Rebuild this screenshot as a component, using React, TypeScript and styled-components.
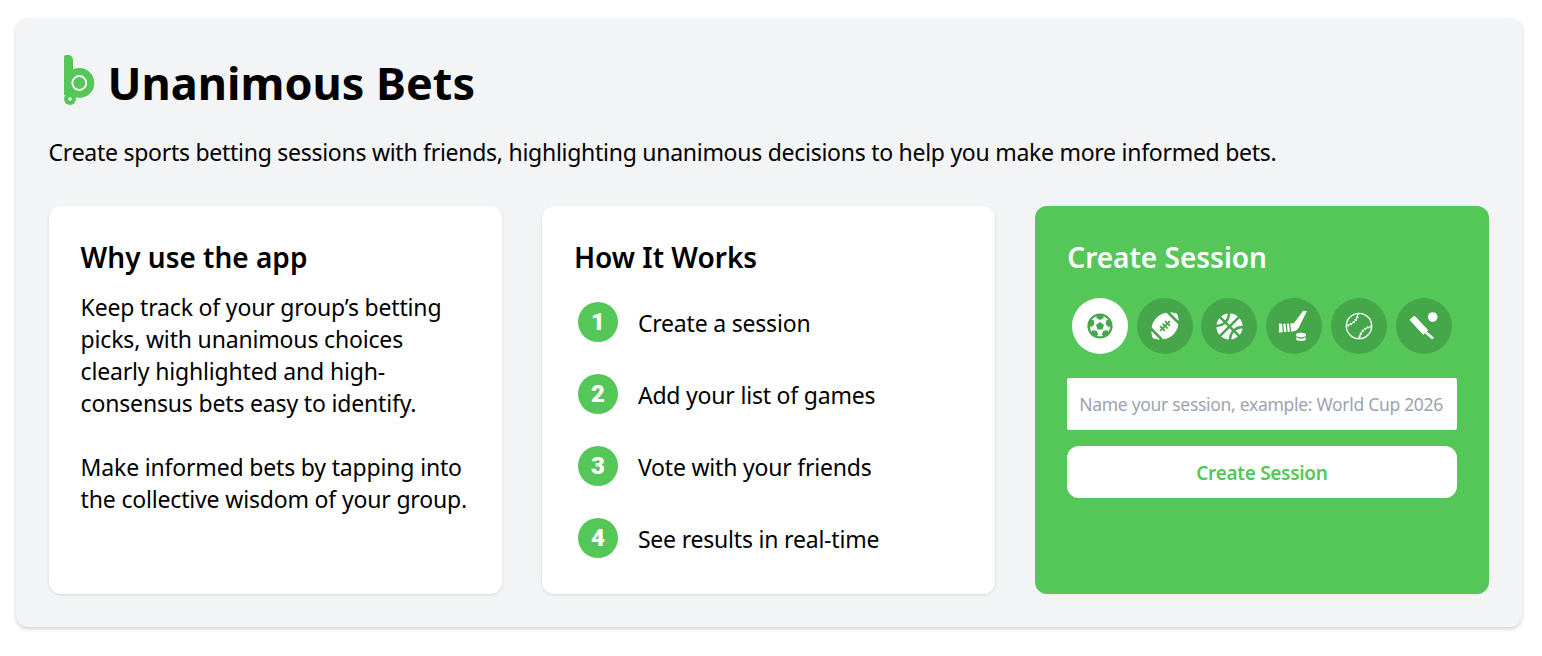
import React from 'react'
import styled, { createGlobalStyle } from 'styled-components'
import { FaFutbol, FaFootballBall, FaBasketballBall } from 'react-icons/fa'

const GREEN = '#55c759'
const DARK_GREEN = '#46a64a'

const GlobalStyle = createGlobalStyle`
  html, body {
    margin: 0;
    background: #fff;
    font-family: "Noto Sans", "Open Sans", sans-serif;
    color: #000;
  }
  * { box-sizing: border-box; }
`

const Page = styled.div`
  width: 1542px;
  height: 656px;
  padding: 18px 20px 29px 16px;
`

const Shell = styled.main`
  height: 609px;
  padding: 32px 33.4px 33px 32.6px;
  background: #f3f4f6;
  border-radius: 12px;
  box-shadow: 0 2px 4px rgba(0, 0, 0, 0.18);
`

const Header = styled.header`
  display: flex;
  align-items: center;
  gap: 10px;
  height: 66px;
  padding-left: 13px;
`

const LogoMark = styled.svg`
  flex: none;
  margin-bottom: 6px;
`

const Title = styled.h1`
  margin: 0 0 1px;
  font-size: 45px;
  font-weight: 700;
  line-height: 65px;
`

const Intro = styled.p`
  margin: 20px 0 38px;
  font-size: 23px;
  line-height: 32px;
  letter-spacing: -0.27px;
`

const Columns = styled.div`
  display: grid;
  grid-template-columns: repeat(3, 1fr);
  gap: 40px;
  height: 388px;
`

const Card = styled.section<{ $accent?: boolean }>`
  padding: 32px;
  border-radius: 12px;
  background: ${p => (p.$accent ? GREEN : '#fff')};
  color: ${p => (p.$accent ? '#fff' : '#000')};
  box-shadow: ${p => (p.$accent ? 'none' : '0 1px 3px rgba(0, 0, 0, 0.12)')};
`

const CardTitle = styled.h2`
  margin: -1px 0 14px;
  font-size: 28px;
  font-weight: 600;
  line-height: 40px;
`

const Copy = styled.p`
  margin: 0 0 32px;
  font-size: 23px;
  line-height: 32px;
  letter-spacing: -0.17px;
`

const Steps = styled.ol`
  display: flex;
  flex-direction: column;
  gap: 32px;
  margin: 0;
  padding: 11px 0 0 4px;
  list-style: none;
`

const Step = styled.li`
  display: flex;
  align-items: center;
  gap: 20px;
  height: 40px;
  font-size: 23px;
  letter-spacing: -0.2px;
`

const StepLabel = styled.span`
  padding-top: 3px;
  line-height: 37px;
`

const StepNumber = styled.span`
  display: flex;
  align-items: center;
  justify-content: center;
  width: 40px;
  height: 40px;
  border-radius: 50%;
  background: ${GREEN};
  color: #fff;
  font-family: "Roboto", sans-serif;
  font-size: 24px;
  font-weight: 900;
  letter-spacing: 0;
`

const Sports = styled.div`
  display: flex;
  justify-content: space-around;
  margin: 21px 0 24px;
`

const Sport = styled.button<{ $active?: boolean; $size?: number }>`
  display: flex;
  align-items: center;
  justify-content: center;
  width: 56px;
  height: 56px;
  padding: 0;
  border: none;
  border-radius: 50%;
  background: ${p => (p.$active ? '#fff' : DARK_GREEN)};
  color: ${p => (p.$active ? DARK_GREEN : '#fff')};
  font-size: ${p => p.$size ?? 28}px;
`

const NameInput = styled.input`
  display: block;
  width: 100%;
  height: 52px;
  padding: 0 12px;
  border: none;
  border-radius: 2px;
  background: #fff;
  font-family: inherit;
  font-size: 17.5px;
  letter-spacing: -0.3px;
  &::placeholder { color: #9ca3af; opacity: 1; }
`

const CreateButton = styled.button`
  display: block;
  width: 100%;
  height: 52px;
  margin-top: 16px;
  padding: 2px 0 0;
  border: none;
  border-radius: 12px;
  background: #fff;
  color: ${GREEN};
  font-family: inherit;
  font-size: 19px;
  font-weight: 600;
  letter-spacing: -0.3px;
`

const Logo = () => (
  <LogoMark width="36" height="54" viewBox="0 0 36 54" aria-hidden="true">
    <path d="M2 4a2 2 0 0 1 2-2h2c3 0 5 2 5 5v14h-2v21h-7z" fill={GREEN} />
    <circle cx="17.300" cy="30" r="15" fill={GREEN} />
    <circle cx="8" cy="46" r="6" fill={GREEN} />
    <circle cx="17.300" cy="30" r="7" fill="none" stroke="#fff" strokeWidth="1.800" />
    <circle cx="8" cy="46" r="1.800" fill="#fff" />
  </LogoMark>
)

const HockeyIcon = () => (
  <svg width="56" height="56" viewBox="0 0 56 56" aria-hidden="true">
    <path d="M37 13h4l-8.500 17q-1.500 3-4.500 3.300l-15 1.200v-9q11 .8 15-.5z" fill="#fff" />
    <path d="M16.500 24.500l1 10M20 24.500l1 9.500M23.500 24.500l1 9" stroke={DARK_GREEN} strokeWidth="1.300" />
    <ellipse cx="35" cy="37" rx="5" ry="2.200" fill="#fff" />
    <path d="M30 39v1.800c0 1.300 2.200 2.300 5 2.300s5-1 5-2.300v-1.800c-1 1.200-3 1.700-5 1.700s-4-.5-5-1.700z" fill="#fff" />
  </svg>
)

const BaseballIcon = () => (
  <svg width="56" height="56" viewBox="0 0 56 56" fill="none" stroke="#fff" aria-hidden="true">
    <circle cx="28" cy="28" r="12.700" strokeWidth="1.300" />
    <path d="M27 15.500q-.5 9-11.500 12.500M40.500 28.500q-10 1.500-12.500 12" strokeWidth="1.100" />
    <path d="M27 15.500q-.5 9-11.500 12.500M40.500 28.500q-10 1.500-12.500 12" strokeWidth="2.600" strokeDasharray="1 2.200" />
  </svg>
)

const CricketIcon = () => (
  <svg width="56" height="56" viewBox="0 0 56 56" aria-hidden="true">
    <circle cx="36.700" cy="19" r="4.800" fill="#fff" />
    <path d="M14 22.500q-.4-.8.3-1.400l3.600-3q.7-.5 1.300.2l13 14-5 4.500z" fill="#fff" />
    <path d="M30 34.500l7 6" stroke="#fff" strokeWidth="2.600" />
  </svg>
)

const STEPS = ['Create a session', 'Add your list of games', 'Vote with your friends', 'See results in real-time']

const App = () => {
  return (
    <Page>
      <GlobalStyle />
      <Shell>
        <Header>
          <Logo />
          <Title>Unanimous Bets</Title>
        </Header>
        <Intro>Create sports betting sessions with friends, highlighting unanimous decisions to help you make more informed bets.</Intro>
        <Columns>
          <Card>
            <CardTitle>Why use the app</CardTitle>
            <Copy>Keep track of your group’s betting picks, with unanimous choices clearly highlighted and high-consensus bets easy to identify.</Copy>
            <Copy>Make informed bets by tapping into the collective wisdom of your group.</Copy>
          </Card>
          <Card>
            <CardTitle>How It Works</CardTitle>
            <Steps>
              {STEPS.map((s, i) => (
                <Step key={s}>
                  <StepNumber>{i + 1}</StepNumber>
                  <StepLabel>{s}</StepLabel>
                </Step>
              ))}
            </Steps>
          </Card>
          <Card $accent>
            <CardTitle>Create Session</CardTitle>
            <Sports>
              <Sport $active $size={26}><FaFutbol /></Sport>
              <Sport><FaFootballBall /></Sport>
              <Sport $size={27}><FaBasketballBall /></Sport>
              <Sport><HockeyIcon /></Sport>
              <Sport><BaseballIcon /></Sport>
              <Sport><CricketIcon /></Sport>
            </Sports>
            <NameInput placeholder="Name your session, example: World Cup 2026" />
            <CreateButton>Create Session</CreateButton>
          </Card>
        </Columns>
      </Shell>
    </Page>
  )
}

export default App
